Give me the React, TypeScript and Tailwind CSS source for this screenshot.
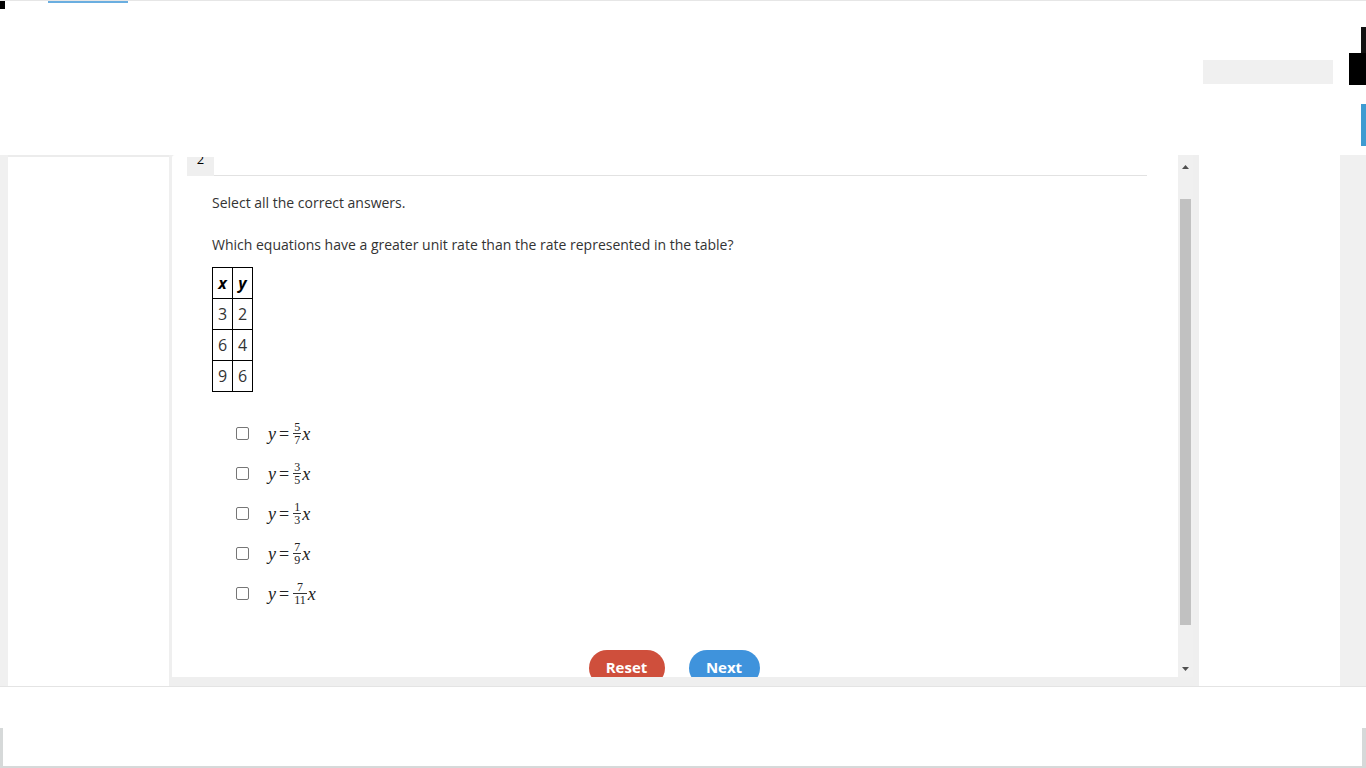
import type { ReactNode } from 'react';

const choices = [
  { n: '5', d: '7' },
  { n: '3', d: '5' },
  { n: '1', d: '3' },
  { n: '7', d: '9' },
  { n: '7', d: '11' },
];

const rows = [
  ['3', '2'],
  ['6', '4'],
  ['9', '6'],
];

function Frac({ n, d }: { n: string; d: string }) {
  return (
    <span className="mx-[1px] inline-flex flex-col items-center font-['Liberation_Serif',serif] text-[12px] leading-[12px] not-italic">
      <span className="px-[1px]">{n}</span>
      <span className="w-full border-t border-[#333] px-[1px] text-center">{d}</span>
    </span>
  );
}

function MathLine({ children }: { children: ReactNode }) {
  return <span className="flex items-center font-['Liberation_Serif',serif] text-[18px] text-[#222]">{children}</span>;
}

export default function App() {
  return (
    <div className="flex h-[768px] w-[1366px] flex-col overflow-hidden bg-white font-['Open_Sans','Liberation_Sans',sans-serif]">
      {/* header strip */}
      <div className="flex h-[155px] shrink-0 flex-col border-t border-[#e6e6e6]">
        <div className="flex h-[8px] items-start">
          <div className="h-[8px] w-[5px] bg-black" />
          <div className="ml-[43px] h-[2px] w-[80px] bg-[#6aaee0]" />
        </div>
        <div className="flex flex-1 items-start justify-end">
          <div className="mt-[51px] mr-[16px] h-[24px] w-[130px] bg-[#f0f0f0]" />
          <div className="flex w-[17px] flex-col">
            <div className="h-[18px]" />
            <div className="ml-auto h-[26px] w-[5px] bg-[#111]" />
            <div className="h-[32px] bg-black" />
            <div className="h-[19px]" />
            <div className="ml-auto h-[42px] w-[5px] bg-[#3d9bd1]" />
          </div>
        </div>
      </div>

      {/* main row */}
      <div className="flex h-[531px] shrink-0">
        <div className="w-[8px] bg-[#f0f0f0]" />
        <div className="w-[161px] border-t-[2px] border-[#ececec]" />
        <div className="flex w-[1030px] bg-[#efefef] pl-[3px] pb-[9px]">
          <div className="flex flex-1 flex-col rounded-tl-[3px] bg-white">
            <div className="flex h-[21px] items-end px-[15px]">
              <div className="flex h-[19px] w-[27px] items-start justify-center overflow-hidden bg-[#efefef] text-[13px] leading-[13px] text-black">
                <span className="-mt-[4px]">2</span>
              </div>
              <div className="mr-[16px] h-[1px] flex-1 bg-[#e2e2e2]" />
            </div>
            <div className="flex flex-1 flex-col overflow-hidden pl-[40px] text-[14px] text-[#333]">
              <p className="mt-[17px] leading-[20px]">Select all the correct answers.</p>
              <p className="mt-[22px] leading-[20px]">Which equations have a greater unit rate than the rate represented in the table?</p>
              <table className="mt-[12px] w-[41px] border-collapse text-[16px] text-[#333]">
                <thead>
                  <tr>
                    <th className="h-[31px] w-[20px] border border-black text-center font-bold italic text-black">x</th>
                    <th className="h-[31px] w-[20px] border border-black text-center font-bold italic text-black">y</th>
                  </tr>
                </thead>
                <tbody>
                  {rows.map((r) => (
                    <tr key={r[0]}>
                      <td className="h-[31px] border border-black text-center font-normal">{r[0]}</td>
                      <td className="h-[31px] border border-black text-center font-normal">{r[1]}</td>
                    </tr>
                  ))}
                </tbody>
              </table>
              <div className="mt-[28px] flex flex-col gap-[14px] pl-[24px]">
                {choices.map((c) => (
                  <div key={c.n + c.d} className="flex h-[26px] items-center gap-[19px]">
                    <span className="h-[13px] w-[13px] rounded-[2px] border border-[#767676] bg-white" />
                    <MathLine>
                      <i className="mt-[3px]">y</i>
                      <span className="mx-[3px] mt-[3px]">=</span>
                      <Frac n={c.n} d={c.d} />
                      <i className="mt-[3px]">x</i>
                    </MathLine>
                  </div>
                ))}
              </div>
              <div className="mt-auto flex h-[27px] items-start justify-center gap-[24px] pr-[42px]">
                <button type="button" className="h-[36px] w-[76px] rounded-full bg-[#cf4f3c] text-[15px] font-bold text-white">
                  <span className="relative top-[-1px]">Reset</span>
                </button>
                <button type="button" className="h-[36px] w-[71px] rounded-full bg-[#3f93dc] text-[15px] font-bold text-white">
                  <span className="relative top-[-1px]">Next</span>
                </button>
              </div>
            </div>
          </div>
          {/* scrollbar */}
          <div className="flex w-[15px] flex-col items-center bg-[#f0f0f0] pt-[10px] pb-[6px]">
            <svg width="7" height="4" viewBox="0 0 7 4"><path d="M0 4 L3.5 0 L7 4 Z" fill="#505050" /></svg>
            <div className="mt-[30px] h-[426px] w-[11px] bg-[#c1c1c1]" />
            <div className="flex-1" />
            <svg width="7" height="4" viewBox="0 0 7 4"><path d="M0 0 L3.5 4 L7 0 Z" fill="#505050" /></svg>
          </div>
          <div className="w-[6px]" />
        </div>
        <div className="w-[141px]" />
        <div className="flex-1 bg-[#f0f0f0]" />
      </div>

      {/* footer strip */}
      <div className="flex flex-1 flex-col border-t border-[#e4e4e4]">
        <div className="h-[41px]" />
        <div className="flex flex-1 border-l-[3px] border-r-[4px] border-b-[2px] border-[#d6d9d9]">
          <div className="flex-1" />
        </div>
      </div>
    </div>
  );
}
